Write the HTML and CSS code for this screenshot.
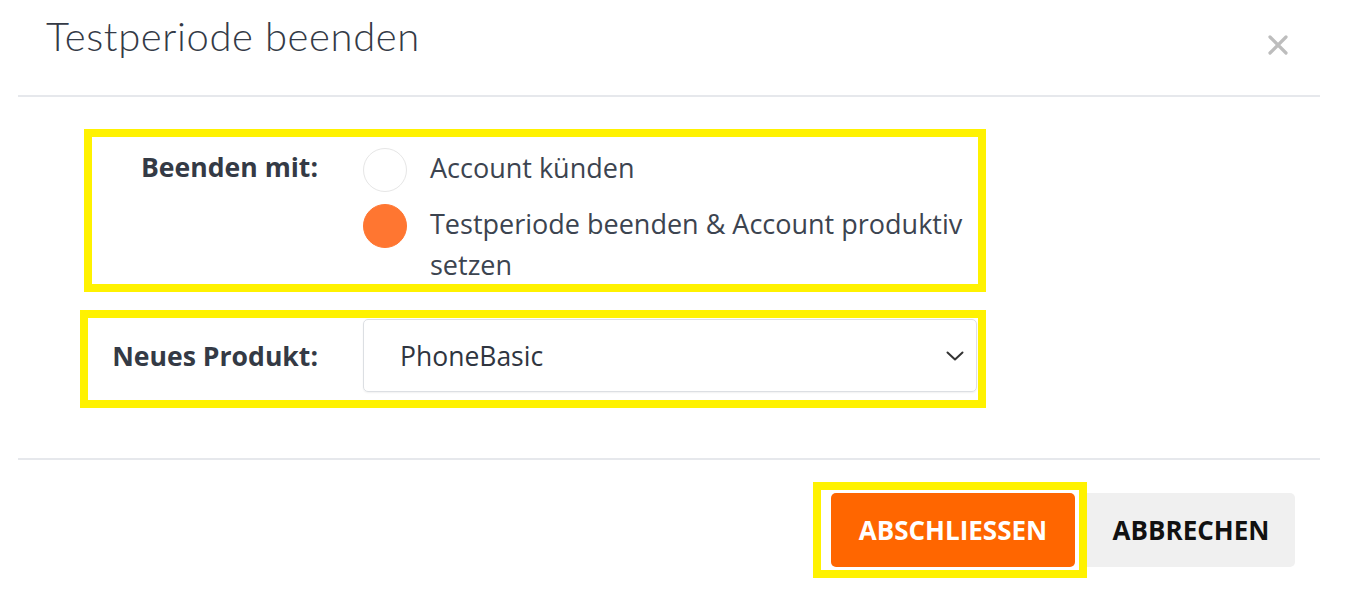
FILE: index.html
```html
<!DOCTYPE html>
<html lang="de">
<head>
<meta charset="utf-8">
<title>Testperiode beenden</title>
<link rel="stylesheet" href="styles.css">
</head>
<body>
<div class="modal">
  <div class="modal-header">
    <h2 class="modal-title">Testperiode beenden</h2>
    <button class="close" type="button" aria-label="Schließen">
      <svg width="20" height="20" viewBox="0 0 20 20"><path d="M2 2 L18 18 M18 2 L2 18" stroke="#bdbdbd" stroke-width="3.2" stroke-linecap="round"/></svg>
    </button>
  </div>
  <div class="modal-body">
    <div class="mark form-row row-mode">
      <div class="label">Beenden mit:</div>
      <div class="options">
        <label class="opt">
          <span class="radio"></span>
          <span class="opt-text">Account künden</span>
        </label>
        <label class="opt">
          <span class="radio checked"></span>
          <span class="opt-text">Testperiode beenden &amp; Account produktiv setzen</span>
        </label>
      </div>
    </div>
    <div class="mark form-row row-product">
      <div class="label">Neues Produkt:</div>
      <div class="select">
        <span class="select-value">PhoneBasic</span>
        <svg class="chev" width="18" height="10" viewBox="0 0 18 10"><path d="M1.5 1.5 L9 8.5 L16.5 1.5" fill="none" stroke="#333" stroke-width="2" stroke-linecap="round" stroke-linejoin="round"/></svg>
      </div>
    </div>
  </div>
  <div class="modal-footer">
    <div class="mark btn-mark">
      <button class="btn btn-primary" type="button">ABSCHLIESSEN</button>
    </div>
    <button class="btn btn-secondary" type="button">ABBRECHEN</button>
  </div>
</div>
</body>
</html>
```

FILE: styles.css
```css
* { box-sizing: border-box; }
html, body { margin: 0; padding: 0; background: #fff; }
body {
  font-family: "Open Sans", "Noto Sans", "Liberation Sans", sans-serif;
  color: #3c4450;
}
.modal {
  margin-left: 18px;
  width: 1302px;
}
.modal-header {
  height: 97px;
  border-bottom: 2px solid #e6e8ec;
  display: flex;
  justify-content: space-between;
  align-items: flex-start;
  padding: 0 32px 0 28px;
}
.modal-title {
  margin: 0;
  padding-top: 11px;
  font-family: "Lato", "Open Sans", sans-serif;
  font-weight: 300;
  font-size: 40px;
  line-height: 50px;
  letter-spacing: 0.6px;
  color: #343a46;
}
.close {
  border: 0;
  background: none;
  padding: 0;
  margin-top: 35px;
  width: 20px;
  height: 20px;
  display: block;
}
.close svg { display: block; }
.modal-body {
  padding: 32px 0 50px 0;
}
.mark {
  border: 8px solid #fff200;
}
.form-row {
  display: grid;
  column-gap: 45px;
}
.row-mode {
  margin-left: 66px;
  width: 902px;
  grid-template-columns: 226px 1fr;
  padding: 11px 0 0 0;
  height: 163px;
}
.row-product {
  margin-left: 62px;
  margin-top: 18px;
  width: 906px;
  grid-template-columns: 230px 1fr;
  padding: 1px 0 8px 0;
  height: 98px;
  align-items: center;
}
.label {
  text-align: right;
  white-space: nowrap;
  font-weight: 700;
  font-size: 26.6px;
  line-height: 44px;
  color: #343a45;
}
.row-mode .label { margin-top: -3px; }
.options {
  display: flex;
  flex-direction: column;
  gap: 12px;
}
.opt {
  display: flex;
  align-items: flex-start;
  gap: 23px;
}
.radio {
  flex: none;
  width: 44px;
  height: 44px;
  border-radius: 50%;
  border: 1px solid #e6e6e6;
  background: #fff;
}
.radio.checked {
  background: #ff7631;
  border-color: #ff7631;
}
.opt-text {
  font-size: 27px;
  line-height: 41px;
  color: #3c4450;
  width: 545px;
  margin-top: -1px;
}
.select {
  height: 73px;
  border: 1px solid #dcdfe3;
  border-radius: 5px;
  display: flex;
  align-items: center;
  justify-content: space-between;
  padding: 0 12px 0 36px;
  margin-right: 1px;
  box-shadow: 0 1px 2px rgba(0,0,0,0.06);
}
.select-value {
  font-size: 26.5px;
  color: #2f3540;
}
.modal-footer {
  border-top: 2px solid #e6e8ec;
  display: flex;
  justify-content: flex-end;
  align-items: flex-start;
  padding: 22px 25px 0 0;
}
.btn-mark {
  padding: 3px 4px 3px 10px;
}
.btn {
  height: 74px;
  border: 0;
  border-radius: 5px;
  font-family: "Open Sans", "Noto Sans", sans-serif;
  font-weight: 700;
  font-size: 26px;
  display: block;
  padding: 0;
}
.btn-primary {
  width: 244px;
  background: #ff6600;
  color: #fff;
}
.btn-secondary {
  margin-top: 11px;
  width: 208px;
  background: #f0f0f0;
  color: #111;
  border-radius: 0 5px 5px 0;
}
```
